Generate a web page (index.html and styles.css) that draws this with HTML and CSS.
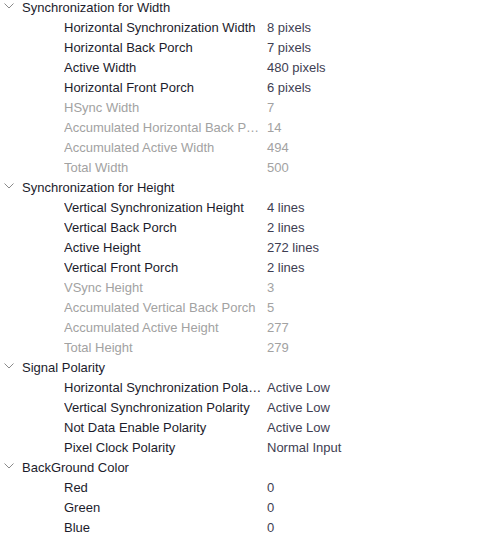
FILE: index.html
```html
<!DOCTYPE html>
<html>
<head>
<meta charset="utf-8">
<link rel="stylesheet" href="styles.css">
</head>
<body>
<div class="tree">
  <div class="group">
    <div class="head"><svg class="chev" viewBox="0 0 10 6" width="10" height="6"><path d="M0.5 0.5 L5 5 L9.5 0.5" fill="none" stroke="#8a8a8a" stroke-width="1"/></svg><span>Synchronization for Width</span></div>
    <div class="row"><span class="k">Horizontal Synchronization Width</span><span class="v">8 pixels</span></div>
    <div class="row"><span class="k">Horizontal Back Porch</span><span class="v">7 pixels</span></div>
    <div class="row"><span class="k">Active Width</span><span class="v">480 pixels</span></div>
    <div class="row"><span class="k">Horizontal Front Porch</span><span class="v">6 pixels</span></div>
    <div class="row dim"><span class="k">HSync Width</span><span class="v">7</span></div>
    <div class="row dim"><span class="k">Accumulated Horizontal Back Porch</span><span class="v">14</span></div>
    <div class="row dim"><span class="k">Accumulated Active Width</span><span class="v">494</span></div>
    <div class="row dim"><span class="k">Total Width</span><span class="v">500</span></div>
  </div>
  <div class="group">
    <div class="head"><svg class="chev" viewBox="0 0 10 6" width="10" height="6"><path d="M0.5 0.5 L5 5 L9.5 0.5" fill="none" stroke="#8a8a8a" stroke-width="1"/></svg><span>Synchronization for Height</span></div>
    <div class="row"><span class="k">Vertical Synchronization Height</span><span class="v">4 lines</span></div>
    <div class="row"><span class="k">Vertical Back Porch</span><span class="v">2 lines</span></div>
    <div class="row"><span class="k">Active Height</span><span class="v">272 lines</span></div>
    <div class="row"><span class="k">Vertical Front Porch</span><span class="v">2 lines</span></div>
    <div class="row dim"><span class="k">VSync Height</span><span class="v">3</span></div>
    <div class="row dim"><span class="k">Accumulated Vertical Back Porch</span><span class="v">5</span></div>
    <div class="row dim"><span class="k">Accumulated Active Height</span><span class="v">277</span></div>
    <div class="row dim"><span class="k">Total Height</span><span class="v">279</span></div>
  </div>
  <div class="group">
    <div class="head"><svg class="chev" viewBox="0 0 10 6" width="10" height="6"><path d="M0.5 0.5 L5 5 L9.5 0.5" fill="none" stroke="#8a8a8a" stroke-width="1"/></svg><span>Signal Polarity</span></div>
    <div class="row"><span class="k">Horizontal Synchronization Polarity</span><span class="v">Active Low</span></div>
    <div class="row"><span class="k">Vertical Synchronization Polarity</span><span class="v">Active Low</span></div>
    <div class="row"><span class="k">Not Data Enable Polarity</span><span class="v">Active Low</span></div>
    <div class="row"><span class="k">Pixel Clock Polarity</span><span class="v">Normal Input</span></div>
  </div>
  <div class="group">
    <div class="head"><svg class="chev" viewBox="0 0 10 6" width="10" height="6"><path d="M0.5 0.5 L5 5 L9.5 0.5" fill="none" stroke="#8a8a8a" stroke-width="1"/></svg><span>BackGround Color</span></div>
    <div class="row"><span class="k">Red</span><span class="v">0</span></div>
    <div class="row"><span class="k">Green</span><span class="v">0</span></div>
    <div class="row"><span class="k">Blue</span><span class="v">0</span></div>
  </div>
</div>
</body>
</html>
```
FILE: styles.css
```css
html, body {
  margin: 0;
  padding: 0;
  background: #ffffff;
  overflow: hidden;
}
body {
  font-family: "Liberation Sans", Arial, sans-serif;
  font-size: 13px;
  color: #1c1c2c;
}
.tree {
  margin-top: -3px;
  display: flex;
  flex-direction: column;
}
.group {
  display: flex;
  flex-direction: column;
}
.head {
  height: 20px;
  display: flex;
  align-items: center;
  padding-left: 4px;
}
.chev {
  display: block;
  margin-right: 8px;
  margin-top: -2px;
}
.row {
  height: 20px;
  display: flex;
  align-items: center;
  padding-left: 64px;
}
.k {
  width: 203px;
  white-space: nowrap;
  overflow: hidden;
  text-overflow: ellipsis;
  padding-right: 4px;
  box-sizing: border-box;
}
.v {
  color: #3e3e52;
  white-space: nowrap;
}
.dim .k, .dim .v {
  color: #a2a2a2;
}
```
